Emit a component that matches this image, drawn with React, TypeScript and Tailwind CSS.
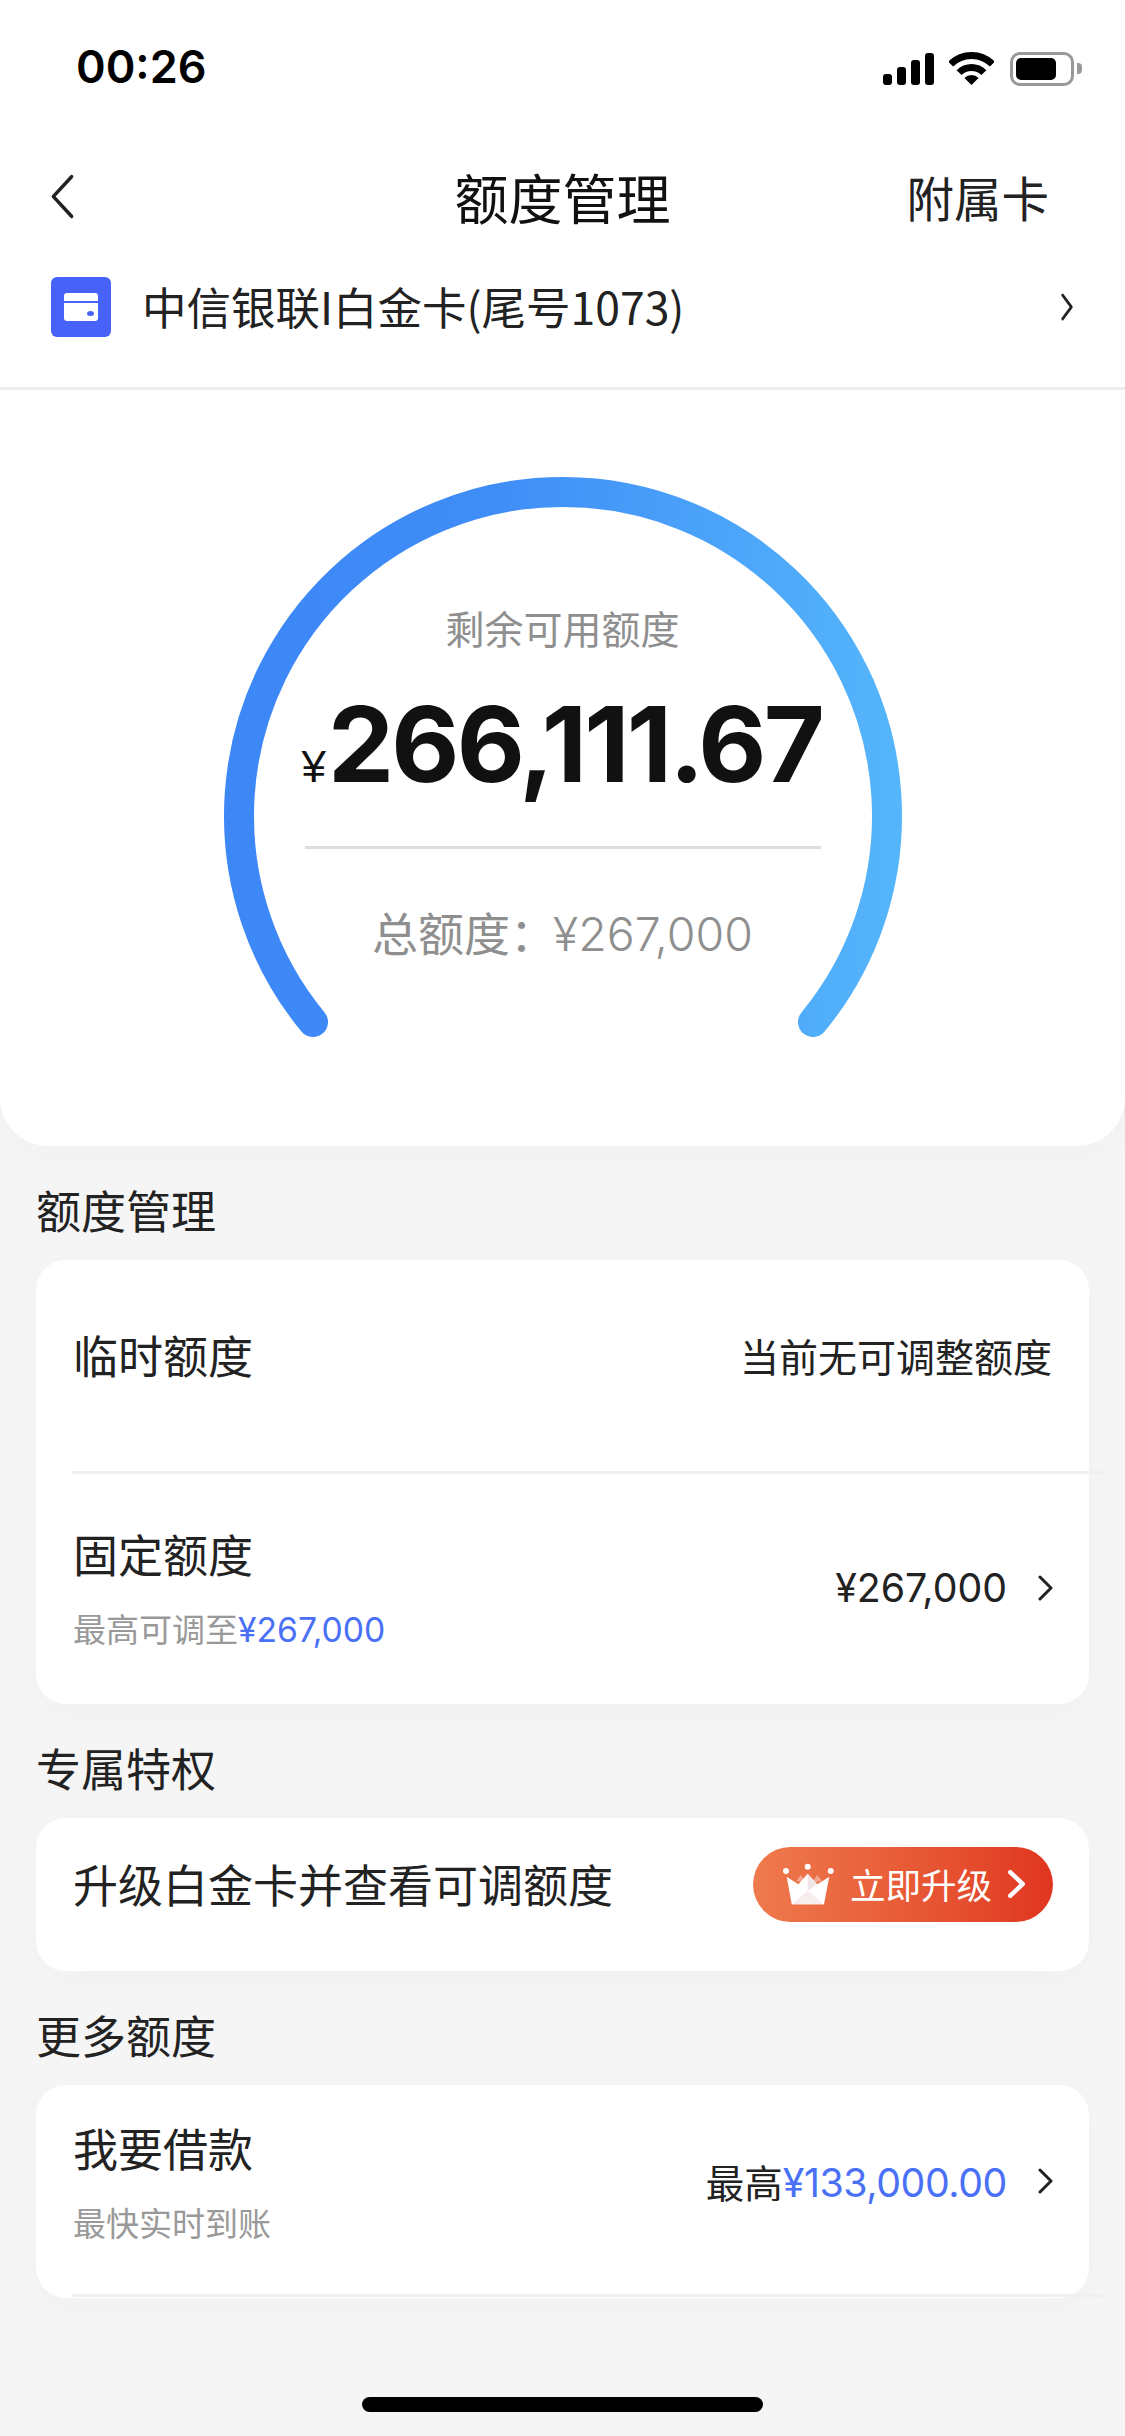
import type { ReactNode } from 'react'

const Chevron = ({ className = '', width = 3 }: { className?: string; width?: number }) => (
  <svg className={className} viewBox="0 0 15 26" fill="none" preserveAspectRatio="none">
    <path d="M2 2 L13 13 L2 24" stroke="currentColor" strokeWidth={width} strokeLinecap="round" strokeLinejoin="round" />
  </svg>
)

function StatusBar() {
  return (
    <div className="h-[149px] flex items-start justify-between pt-[52px] pl-[76px] pr-[43px]">
      <span className="-mt-[3px] text-[45px] leading-[36px] font-semibold text-black font-['Inter']">00:26</span>
      <div className="flex items-start">
        <svg width="52" height="32" viewBox="0 0 52 32" className="mt-[1px]">
          <rect x="0" y="21" width="9" height="11" rx="3" />
          <rect x="14" y="14" width="9" height="18" rx="3" />
          <rect x="28" y="7" width="9" height="25" rx="3" />
          <rect x="42" y="0" width="9" height="32" rx="3" />
        </svg>
        <svg width="45" height="33" viewBox="0 0 45 33" className="ml-[14px]" fill="none">
          <path d="M1.64 12.14 A29.5 29.5 0 0 1 43.36 12.14" stroke="#000" strokeWidth="7" />
          <path d="M10.1 20.6 A17.5 17.5 0 0 1 34.9 20.6" stroke="#000" strokeWidth="7" />
          <path d="M22.5 33 L15.4 25.9 A10 10 0 0 1 29.6 25.9 Z" fill="#000" />
        </svg>
        <div className="ml-[16px] w-[64px] h-[34px] rounded-[10px] border-[3px] border-[#999999] p-[3px] pr-[15px]">
          <div className="h-full rounded-[5px] bg-black" />
        </div>
        <div className="ml-[3px] mt-[11px] w-[5px] h-[11px] rounded-r-[4px] bg-[#999999]" />
      </div>
    </div>
  )
}

function Gauge() {
  return (
    <div className="relative h-[756px] flex flex-col items-center">
      <svg className="absolute left-0 top-0" width="1125" height="756" viewBox="0 0 1125 756" fill="none">
        <defs>
          <linearGradient id="arc" gradientUnits="userSpaceOnUse" x1="224" y1="0" x2="902" y2="0">
            <stop offset="0" stopColor="#3d87f7" />
            <stop offset="0.4" stopColor="#3f8df7" />
            <stop offset="1" stopColor="#55b6fb" />
          </linearGradient>
        </defs>
        <path d="M313 632 A324 324 0 1 1 813 632" stroke="url(#arc)" strokeWidth="30" strokeLinecap="round" />
      </svg>
      <div className="relative mt-[215px] text-[39px] leading-[44px] text-[#8f8f8f]">剩余可用额度</div>
      <div className="relative mt-[39px] h-[112px] w-[520px] flex items-baseline text-[#111111]">
        <span className="font-['Liberation_Sans'] text-[44px] leading-[112px] -ml-[1px] mr-[2px]">¥</span>
        <span className="font-['Inter'] text-[105px] leading-[112px] font-bold tracking-[-2.8px]">266,111.67</span>
      </div>
      <div className="relative mt-[46px] ml-[1px] w-[516px] h-[3px] bg-[#dddddd]" />
      <div className="relative mt-[55px] flex items-baseline text-[46px] leading-[54px] text-[#8f8f8f]">
        总额度：
        <span className="-ml-[3px] font-['Inter'] text-[46.5px] font-light">¥267,000</span>
      </div>
    </div>
  )
}

const Heading = ({ children }: { children: ReactNode }) => (
  <div className="h-[114px] pt-[14px] pl-[36px] flex items-center text-[45px] leading-[60px] text-[#222222]">{children}</div>
)

const Card = ({ children, className = '' }: { children: ReactNode; className?: string }) => (
  <div className={`mx-[36px] rounded-[30px] bg-white shadow-[0_10px_40px_rgba(0,0,0,0.018)] ${className}`}>{children}</div>
)

const Divider = () => <div className="ml-[36px] w-[1032px] h-[3px] bg-[#f0f0f0]" />

const Amount = ({ children }: { children: ReactNode }) => (
  <span className="font-['Inter'] text-[1.02em]">{children}</span>
)

function TwoLineRow({ title, sub, right }: { title: string; sub: ReactNode; right: ReactNode }) {
  return (
    <div className="flex items-center justify-between pl-[37px] pr-[36px]">
      <div className="flex flex-col gap-[22px]">
        <div className="text-[45px] leading-[60px] text-[#222222]">{title}</div>
        <div className="text-[33px] leading-[44px] text-[#999999]">{sub}</div>
      </div>
      <div className="flex items-center text-[38.5px] leading-[50px] text-[#222222]">
        {right}
        <Chevron className="ml-[31px] w-[15px] h-[26px]" />
      </div>
    </div>
  )
}

function Crown() {
  return (
    <svg width="52" height="46" viewBox="0 0 52 46" fill="none">
      <path d="M14 20 L19 14 L24 22 Z M30 22 L35 14 L40 20 Z" fill="#f2a48e" />
      <path d="M4.7 15.7 L16.3 23.3 L25.7 12.7 L35.3 23.3 L47.3 15.7 L42 43.3 L9.7 43.3 Z" fill="#ffffff" />
      <path d="M25.7 12.7 L35.3 23.3 L25.7 30 Z" fill="#f1e6e6" />
      <path d="M25.7 30 L42 43.3 L9.7 43.3 Z" fill="#f8eded" />
      <circle cx="4" cy="10" r="3" fill="#fff" />
      <circle cx="25.7" cy="5.7" r="3" fill="#fff" />
      <circle cx="48.7" cy="10" r="3" fill="#fff" />
    </svg>
  )
}

export default function App() {
  return (
    <div className="w-[1125px] h-[2436px] overflow-hidden bg-[#f5f5f5] font-['Noto_Sans_CJK_SC',sans-serif]">
      <div className="h-[1146px] rounded-b-[48px] bg-white shadow-[0_10px_40px_rgba(0,0,0,0.02)]">
        <StatusBar />
        {/* Nav */}
        <div className="h-[100px] relative flex items-center justify-between pb-[5px] pl-[50px] pr-[76px]">
          <Chevron className="w-[25px] h-[47px] text-[#222222] -scale-x-100" width={2} />
          <span className="absolute left-0 right-0 text-center text-[54px] leading-[70px] text-[#111111]">额度管理</span>
          <span className="text-[47.5px] leading-[70px] text-[#222222]">附属卡</span>
        </div>
        {/* Card selector */}
        <div className="h-[138px] pb-[22px] pl-[51px] pr-[52px] flex items-center">
          <div className="w-[60px] h-[60px] rounded-[6px] bg-[#4762f8] flex items-center justify-center">
            <svg width="34" height="28" viewBox="0 0 34 28">
              <path d="M3 0 H31 A3 3 0 0 1 34 3 V8 H0 V3 A3 3 0 0 1 3 0 Z" fill="#fff" />
              <path d="M0 10 H34 V25 A3 3 0 0 1 31 28 H3 A3 3 0 0 1 0 25 Z" fill="#fff" />
              <ellipse cx="26.5" cy="20.5" rx="3.5" ry="2.5" fill="#4762f8" />
            </svg>
          </div>
          <span className="ml-[31px] pb-[2px] flex-1 text-[44.5px] leading-[60px] text-[#222222]">中信银联I白金卡(尾号1073)</span>
          <Chevron className="w-[12px] h-[28px] text-[#222222]" />
        </div>
        <div className="h-[3px] bg-[#eeeeee]" />
        <Gauge />
      </div>

      <Heading>额度管理</Heading>
      <Card className="h-[444px]">
        <div className="h-[211px] pb-[21px] pl-[37px] pr-[37px] flex items-center justify-between">
          <span className="text-[45px] leading-[60px] text-[#222222]">临时额度</span>
          <span className="text-[39px] leading-[50px] text-[#222222]">当前无可调整额度</span>
        </div>
        <Divider />
        <div className="pt-[50px]">
          <TwoLineRow
            title="固定额度"
            sub={
              <>
                最高可调至<span className="text-[#4a70f6]"><Amount>¥267,000</Amount></span>
              </>
            }
            right={<Amount>¥267,000</Amount>}
          />
        </div>
      </Card>

      <Heading>专属特权</Heading>
      <Card className="h-[153px] pb-[21px] pl-[37px] pr-[36px] flex items-center justify-between">
        <span className="text-[45px] leading-[60px] text-[#222222]">升级白金卡并查看可调额度</span>
        <div className="w-[300px] h-[75px] rounded-full bg-gradient-to-r from-[#ee7a4c] to-[#e0351f] flex items-center pl-[29px]">
          <Crown />
          <span className="ml-[16px] text-[35.5px] leading-[50px] text-white">立即升级</span>
          <Chevron className="ml-[16px] w-[17px] h-[28px] text-white" width={4} />
        </div>
      </Card>

      <Heading>更多额度</Heading>
      <Card className="h-[213px] pt-[33px]">
        <TwoLineRow
          title="我要借款"
          sub="最快实时到账"
          right={
            <>
              最高<span className="text-[#4a70f6] tracking-[-0.4px]"><Amount>¥133,000.00</Amount></span>
            </>
          }
        />
        <div className="h-[50px]" />
        <Divider />
      </Card>

      <div className="mt-[99px] mx-auto w-[401px] h-[15px] rounded-full bg-black" />
    </div>
  )
}
